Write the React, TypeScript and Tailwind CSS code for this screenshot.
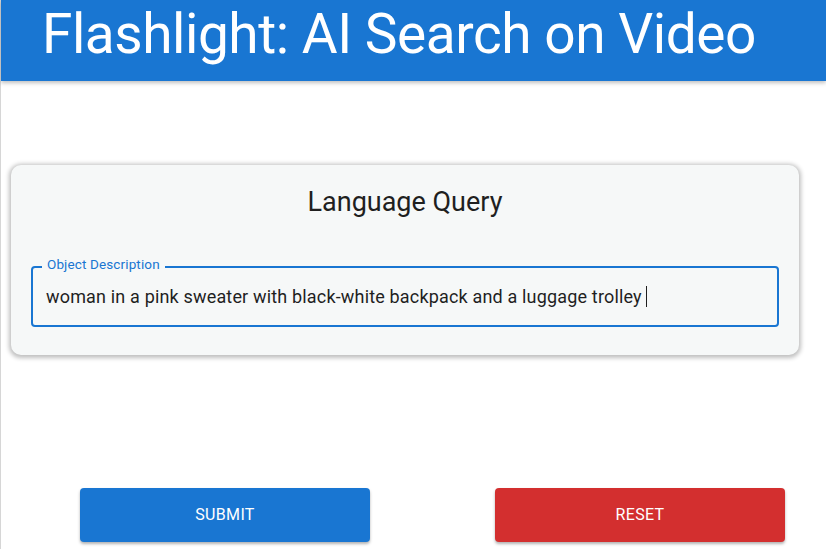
import React from 'react';

const font = { fontFamily: 'Roboto, "Liberation Sans", sans-serif' };

export default function App() {
  return (
    <div className="min-h-[549px] w-full bg-white border-l border-[#d6d6d6]" style={font}>
      <header className="h-[81px] w-full bg-[#1976d2] shadow-[0_2px_4px_rgba(0,0,0,0.25)] pl-[41px] pt-[4px]">
        <h1 className="text-[55px] leading-[60px] tracking-[-0.00833em] font-normal text-white whitespace-nowrap">
          Flashlight: AI Search on Video
        </h1>
      </header>

      <div className="mt-[84px] ml-[10px] w-[788px] rounded-[10px] bg-[#f6f8f8] shadow-[0_1px_4px_2px_rgba(0,0,0,0.25)] px-[20px] pt-[19px] pb-[28px]">
        <h2 className="text-center text-[27px] leading-[36px] text-[#1f1f1f]">Language Query</h2>

        <div className="relative mt-[46px] h-[61px] rounded-[4px] border-2 border-[#1976d2] flex items-center px-[13px]">
          <span className="absolute left-[9px] top-[-13px] px-[5px] bg-[#f6f8f8] text-[13.5px] leading-[18px] tracking-[0.00938em] text-[#1976d2]">
            Object Description
          </span>
          <span className="text-[18px] leading-[24px] tracking-[0.00938em] text-[#1f1f1f] whitespace-nowrap">
            woman in a pink sweater with black-white backpack and a luggage trolley
          </span>
          <span className="ml-[4px] h-[21px] w-px bg-[#1f1f1f]" />
        </div>
      </div>

      <div className="mt-[133px] flex pl-[79px] gap-[125px]">
        <button className="h-[54px] w-[290px] rounded-[4px] bg-[#1976d2] text-white text-[16px] tracking-[0.02em] shadow-[0_2px_3px_rgba(0,0,0,0.3)]">
          SUBMIT
        </button>
        <button className="h-[54px] w-[290px] rounded-[4px] bg-[#d32f2f] text-white text-[16px] tracking-[0.02em] shadow-[0_2px_3px_rgba(0,0,0,0.3)]">
          RESET
        </button>
      </div>
    </div>
  );
}
